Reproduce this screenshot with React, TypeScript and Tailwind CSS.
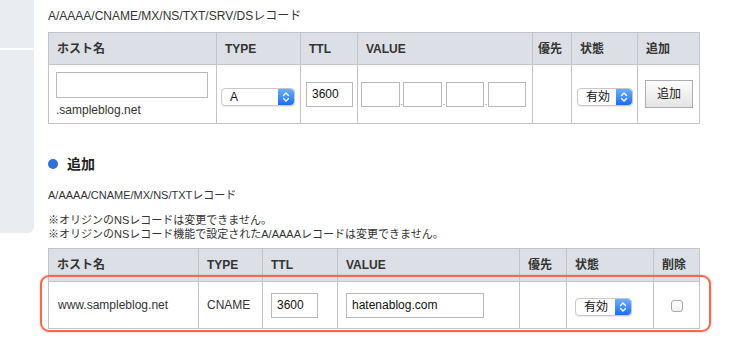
import React from 'react';

const font = { fontFamily: '"Liberation Sans", "Noto Sans CJK JP", sans-serif' };

function Stepper() {
  return (
    <span className="flex h-full w-[16px] items-center justify-center rounded-r-[4px] bg-gradient-to-b from-[#6aaefb] to-[#1a6cef]">
      <svg width="8" height="12" viewBox="0 0 8 12" fill="none" stroke="white" strokeWidth="1.4" strokeLinecap="round" strokeLinejoin="round">
        <path d="M1.5 4.5 L4 2 L6.5 4.5" />
        <path d="M1.5 7.5 L4 10 L6.5 7.5" />
      </svg>
    </span>
  );
}

function MacSelect({ label, width }: { label: string; width: string }) {
  return (
    <div className={`flex h-[18px] ${width} items-stretch rounded-[4px] border border-[#c8c8c8] bg-white shadow-[0_1px_1px_rgba(0,0,0,0.08)]`}>
      <span className="flex-1 pl-[8px] text-[12px] leading-[16px] text-[#111]">{label}</span>
      <Stepper />
    </div>
  );
}

function TextBox({ value, className }: { value?: string; className: string }) {
  return (
    <div className={`border border-[#b8b8b8] bg-white pl-[5px] text-[12px] text-[#111] flex items-center ${className}`}>
      {value}
    </div>
  );
}

function Dot({ width }: { width: string }) {
  return <span className={`${width} text-center text-[9px] leading-[10px] text-[#777]`}>.</span>;
}

const th = 'border border-[#c2c4c7] bg-[#dce0e6] text-left align-middle text-[12px] font-bold text-[#333] px-[8px]';
const td = 'border border-[#c2c4c7] align-middle text-[12px] text-[#333]';

export default function App() {
  return (
    <div className="flex w-[740px] h-[340px] bg-white overflow-hidden" style={font}>
      {/* side navigation stub */}
      <div className="flex w-[34px] shrink-0 flex-col gap-[2px]">
        <div className="h-[48px] bg-[#e9edf2]" />
        <div className="h-[183px] rounded-br-[6px] bg-[#e9edf2]" />
      </div>

      <div className="ml-[14px] w-[651px] pt-[8px] text-[#333]">
        <p className="h-[16px] text-[12px] leading-[16px]">A/AAAA/CNAME/MX/NS/TXT/SRV/DSレコード</p>

        <table className="mt-[8px] w-[651px] table-fixed border-collapse">
          <colgroup>
            <col className="w-[168px]" />
            <col className="w-[84px]" />
            <col className="w-[57px]" />
            <col className="w-[175px]" />
            <col className="w-[39px]" />
            <col className="w-[66px]" />
            <col className="w-[62px]" />
          </colgroup>
          <thead>
            <tr className="h-[32px]">
              <th className={th}>ホスト名</th>
              <th className={th}>TYPE</th>
              <th className={th}>TTL</th>
              <th className={th}>VALUE</th>
              <th className={`${th} !px-[5px]`}>優先</th>
              <th className={th}>状態</th>
              <th className={th}>追加</th>
            </tr>
          </thead>
          <tbody>
            <tr className="h-[59px]">
              <td className={`${td} pl-[7px]`}>
                <TextBox className="h-[26px] w-[152px]" />
                <p className="mt-[5px] leading-[14px]">.sampleblog.net</p>
              </td>
              <td className={`${td} pl-[4px] pt-[5px]`}>
                <MacSelect label="A" width="w-[74px]" />
              </td>
              <td className={`${td} pl-[5px]`}>
                <TextBox value="3600" className="h-[25px] w-[47px]" />
              </td>
              <td className={`${td} pl-[3px]`}>
                <div className="flex items-end">
                  <TextBox className="h-[25px] w-[39px]" />
                  <Dot width="w-[3px]" />
                  <TextBox className="h-[25px] w-[39px]" />
                  <Dot width="w-[4px]" />
                  <TextBox className="h-[25px] w-[38px]" />
                  <Dot width="w-[4px]" />
                  <TextBox className="h-[25px] w-[38px]" />
                </div>
              </td>
              <td className={td} />
              <td className={`${td} pl-[5px] pt-[6px]`}>
                <MacSelect label="有効" width="w-[56px]" />
              </td>
              <td className={`${td} pl-[7px]`}>
                <button className="h-[28px] w-[48px] border border-[#adadad] bg-gradient-to-b from-[#fdfdfd] to-[#e4e4e4] text-[12px] text-[#222]">
                  追加
                </button>
              </td>
            </tr>
          </tbody>
        </table>

        <div className="mt-[30px] flex h-[20px] items-center">
          <span className="h-[10px] w-[10px] rounded-full bg-[#2f6fd9]" />
          <span className="ml-[9px] text-[14px] font-bold text-[#222]">追加</span>
        </div>

        <p className="mt-[13px] h-[16px] text-[11px] leading-[16px]">A/AAAA/CNAME/MX/NS/TXTレコード</p>
        <p className="mt-[10px] text-[11px] leading-[14px]">※オリジンのNSレコードは変更できません。</p>
        <p className="text-[11px] leading-[14px]">※オリジンのNSレコード機能で設定されたA/AAAAレコードは変更できません。</p>

        <div className="relative mt-[7px]">
          <table className="w-[651px] table-fixed border-collapse">
            <colgroup>
              <col className="w-[150px]" />
              <col className="w-[64px]" />
              <col className="w-[75px]" />
              <col className="w-[182px]" />
              <col className="w-[47px]" />
              <col className="w-[87px]" />
              <col className="w-[46px]" />
            </colgroup>
            <thead>
              <tr className="h-[33px]">
                <th className={th}>ホスト名</th>
                <th className={th}>TYPE</th>
                <th className={th}>TTL</th>
                <th className={th}>VALUE</th>
                <th className={th}>優先</th>
                <th className={th}>状態</th>
                <th className={th}>削除</th>
              </tr>
            </thead>
            <tbody>
              <tr className="h-[47px]">
                <td className={`${td} pl-[9px]`}>www.sampleblog.net</td>
                <td className={`${td} pl-[8px]`}>CNAME</td>
                <td className={`${td} pl-[8px]`}>
                  <TextBox value="3600" className="h-[25px] w-[47px]" />
                </td>
                <td className={`${td} pl-[8px]`}>
                  <TextBox value="hatenablog.com" className="h-[25px] w-[138px]" />
                </td>
                <td className={td} />
                <td className={`${td} pl-[8px] pt-[3px]`}>
                  <MacSelect label="有効" width="w-[57px]" />
                </td>
                <td className={`${td} text-center`}>
                  <span className="inline-block h-[12px] w-[12px] rounded-[3px] border border-[#a9a9a9] bg-gradient-to-b from-white to-[#f0f0f0] align-middle" />
                </td>
              </tr>
            </tbody>
          </table>
          {/* highlight annotation */}
          <div className="pointer-events-none absolute left-[-8px] top-[27px] h-[57px] w-[671px] rounded-[9px] border-2 border-[#f3694d] shadow-[0_0_2px_rgba(243,105,77,0.6)]" />
        </div>
      </div>
    </div>
  );
}
